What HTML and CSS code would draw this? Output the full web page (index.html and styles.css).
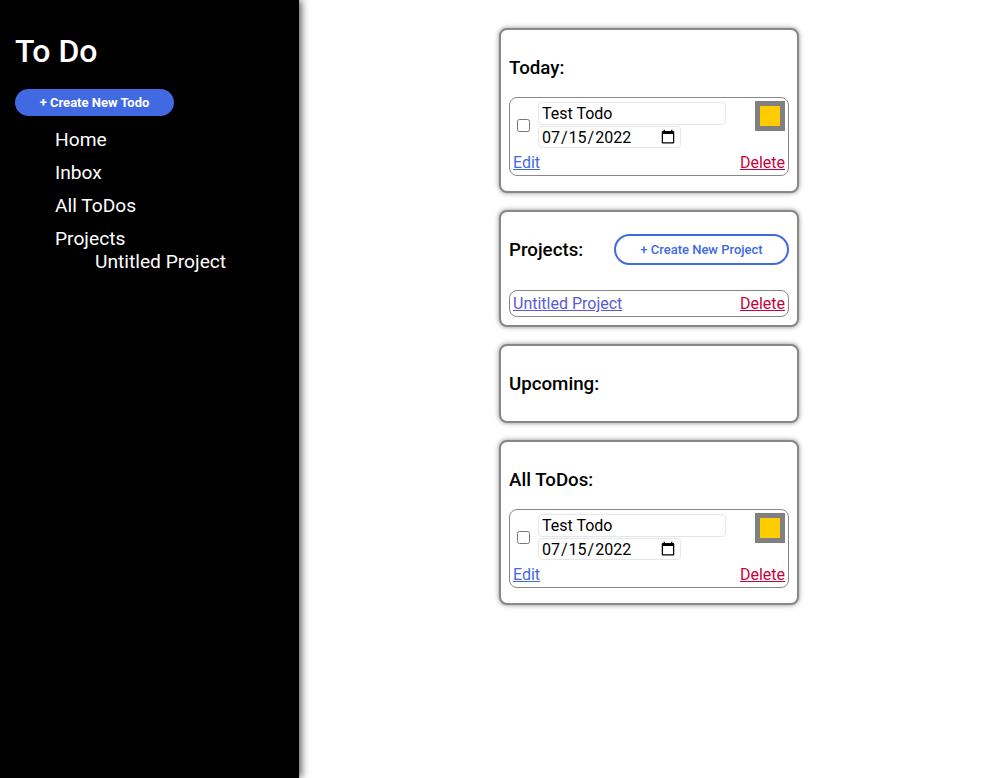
FILE: index.html
```html
<!DOCTYPE html>
<html lang="en">
<head>
<meta charset="utf-8">
<title>To Do</title>
<link rel="stylesheet" href="styles.css">
</head>
<body>
<div class="layout">
  <aside class="sidebar">
    <h1 class="brand">To Do</h1>
    <button class="btn-new-todo">+ Create New Todo</button>
    <ul class="nav">
      <li>Home</li>
      <li>Inbox</li>
      <li>All ToDos</li>
      <li>Projects
        <ul class="subnav">
          <li>Untitled Project</li>
        </ul>
      </li>
    </ul>
  </aside>
  <main class="main">
    <section class="card">
      <h3 class="card-title">Today:</h3>
      <div class="todo">
        <div class="todo-row">
          <input type="checkbox" class="todo-check">
          <div class="todo-fields">
            <input type="text" class="todo-name" value="Test Todo">
            <input type="date" class="todo-date" value="2022-07-15">
          </div>
          <div class="swatch"><div class="swatch-fill"></div></div>
        </div>
        <div class="todo-links">
          <a href="#" class="link-edit">Edit</a>
          <a href="#" class="link-delete">Delete</a>
        </div>
      </div>
    </section>
    <section class="card">
      <div class="card-head">
        <h3 class="card-title">Projects:</h3>
        <button class="btn-new-project">+ Create New Project</button>
      </div>
      <div class="project">
        <a href="#" class="link-project">Untitled Project</a>
        <a href="#" class="link-delete">Delete</a>
      </div>
    </section>
    <section class="card">
      <h3 class="card-title">Upcoming:</h3>
    </section>
    <section class="card">
      <h3 class="card-title">All ToDos:</h3>
      <div class="todo">
        <div class="todo-row">
          <input type="checkbox" class="todo-check">
          <div class="todo-fields">
            <input type="text" class="todo-name" value="Test Todo">
            <input type="date" class="todo-date" value="2022-07-15">
          </div>
          <div class="swatch"><div class="swatch-fill"></div></div>
        </div>
        <div class="todo-links">
          <a href="#" class="link-edit">Edit</a>
          <a href="#" class="link-delete">Delete</a>
        </div>
      </div>
    </section>
  </main>
</div>
</body>
</html>
```
FILE: styles.css
```css
* { box-sizing: border-box; }
html, body { margin: 0; padding: 0; }
body {
  font-family: Roboto, "Liberation Sans", sans-serif;
  color: #000;
  background: #fff;
}
.layout {
  display: flex;
  min-height: 100vh;
}
.sidebar {
  width: 299px;
  flex: 0 0 299px;
  background: #000;
  color: #fff;
  padding: 33px 15px 0;
  box-shadow: 2px 0 8px rgba(0,0,0,0.7);
  position: relative;
  z-index: 1;
}
.brand {
  margin: 0 0 19px;
  font-size: 32px;
  line-height: 37px;
  font-weight: 500;
}
.btn-new-todo {
  display: block;
  width: 159px;
  height: 27px;
  border: none;
  border-radius: 14px;
  background: #4169e1;
  color: #fff;
  font-family: Roboto, "Liberation Sans", sans-serif;
  font-size: 13px;
  font-weight: 700;
  padding: 0;
}
.nav {
  list-style: none;
  margin: 12px 0 0;
  padding: 0 0 0 40px;
  font-size: 19.2px;
}
.nav > li {
  line-height: 23px;
  margin-bottom: 10px;
}
.subnav {
  list-style: none;
  margin: 0;
  padding: 0 0 0 40px;
}
.subnav li { line-height: 23px; }
.main {
  flex: 1;
  display: flex;
  flex-direction: column;
  align-items: center;
  padding: 28px 0 0 5px;
  gap: 17px;
}
.card {
  width: 300px;
  border: 2px solid #888;
  border-radius: 8px;
  box-shadow: 0 0 5px rgba(0,0,0,0.45);
  padding: 8px;
  background: #fff;
}
.card-title {
  margin: 19px 0 17px;
  font-size: 18.72px;
  line-height: 23px;
  font-weight: 500;
}
.card > .card-title + .todo { margin-top: 1px; }
.card-head {
  display: flex;
  justify-content: space-between;
  align-items: center;
}
.btn-new-project {
  width: 175px;
  height: 31px;
  border: 2px solid #4169e1;
  border-radius: 16px;
  background: #fff;
  color: #4169e1;
  font-family: Roboto, "Liberation Sans", sans-serif;
  font-size: 13px;
  font-weight: 500;
  padding: 0;
}
.todo {
  border: 1px solid #888;
  border-radius: 8px;
  padding: 3px;
  margin-bottom: 7px;
}
.todo-row {
  display: flex;
  align-items: center;
  margin-bottom: 4px;
}
.todo-check {
  width: 13px;
  height: 13px;
  margin: 3px 3px 3px 4px;
}
.todo-fields {
  display: flex;
  flex-direction: column;
  align-items: flex-start;
  gap: 1px;
  padding: 1px 0;
  margin-left: 5px;
}
.todo-name, .todo-date {
  font-family: Roboto, "Liberation Sans", sans-serif;
  font-size: 16px;
  color: #000;
  border: 1px solid #e6e6e6;
  border-radius: 4px;
  background: #fff;
  margin: 0;
}
.todo-name {
  width: 188px;
  height: 23px;
  padding: 0 3px;
}
.todo-date {
  width: 143px;
  height: 22px;
  padding: 0 2px;
}
.swatch {
  margin-left: auto;
  align-self: flex-start;
  width: 30px;
  height: 30px;
  background: #808080;
  padding: 5px;
}
.swatch-fill {
  width: 20px;
  height: 20px;
  background: #ffcc00;
}
.todo-links, .project {
  display: flex;
  justify-content: space-between;
  font-size: 16px;
  line-height: 19px;
}
.project {
  border: 1px solid #888;
  border-radius: 8px;
  padding: 3px;
  margin-top: 11px;
}
.link-edit { color: #4169e1; }
.link-project { color: #5a5ad8; }
.link-delete { color: #c8003c; }
```
